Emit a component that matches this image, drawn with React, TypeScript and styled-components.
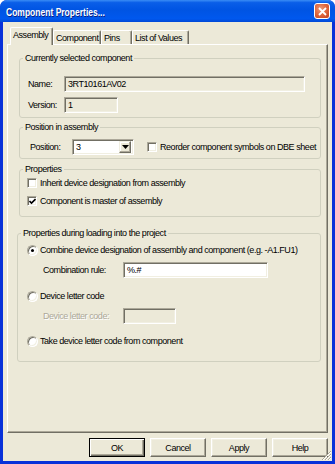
import React from 'react';
import styled, { createGlobalStyle } from 'styled-components';

const Global = createGlobalStyle`
  html, body { margin: 0; padding: 0; background: #ffffff; }
  body {
    font-family: "Liberation Sans", Arial, sans-serif;
    font-size: 9px;
    letter-spacing: -0.45px;
    color: #000;
  }
  * { box-sizing: border-box; }
`;

const Window = styled.div`
  position: relative;
  width: 335px;
  height: 464px;
  display: flex;
  flex-direction: column;
  background: #0831d9;
  border-radius: 7px 7px 0 0;
  overflow: hidden;
`;

const TitleBar = styled.div`
  flex: 0 0 22px;
  display: flex;
  align-items: center;
  justify-content: space-between;
  padding: 1px 5px 0 6px;
  background: linear-gradient(to bottom, #3a8cf5 0%, #0a5ee8 12%, #0054e3 45%, #0058ee 85%, #0048d6 100%);
`;

const TitleText = styled.span`
  display: inline-block;
  color: #fff;
  font-weight: bold;
  font-size: 11.5px;
  letter-spacing: 0;
  text-shadow: 1px 1px 0 #0a1e80;
  transform: scaleX(0.74);
  transform-origin: left center;
  white-space: nowrap;
`;

const CloseButton = styled.div`
  width: 16px;
  height: 16px;
  margin-top: -1px;
  border: 1px solid #fff;
  border-radius: 3px;
  background: radial-gradient(circle at 40% 35%, #ef9a78 0%, #e06a40 45%, #c4401c 100%);
  display: flex;
  align-items: center;
  justify-content: center;
`;

const Client = styled.div`
  flex: 1;
  margin: 0 3px 3px 3px;
  background: #ece9d8;
  display: flex;
  flex-direction: column;
  padding: 6px 4px 0 4px;
`;

const TabStrip = styled.div`
  display: flex;
  align-items: flex-end;
  height: 16px;
  padding-left: 3px;
`;

const Tab = styled.div<{ $active?: boolean; $w: number }>`
  position: relative;
  z-index: ${(p) => (p.$active ? 2 : 1)};
  width: ${(p) => p.$w}px;
  height: ${(p) => (p.$active ? 18 : 14)}px;
  margin-bottom: ${(p) => (p.$active ? -1 : 0)}px;
  background: #ece9d8;
  border-top: 1px solid #ffffff;
  border-left: 1px solid #ffffff;
  border-right: 1px solid #716f64;
  box-shadow: inset -1px 0 0 #aca899;
  border-radius: 2px 2px 0 0;
  display: flex;
  align-items: ${(p) => (p.$active ? 'flex-start' : 'center')};
  padding: ${(p) => (p.$active ? '2px 0 0 2px' : '0 0 0 2px')};
  white-space: nowrap;
  overflow: hidden;
`;

const Panel = styled.div`
  flex: 0 0 389px;
  border-top: 1px solid #ffffff;
  border-left: 1px solid #ffffff;
  border-right: 1px solid #716f64;
  border-bottom: 1px solid #716f64;
  box-shadow: inset -1px -1px 0 #aca899;
  padding: 7px 6px 0 11px;
  display: flex;
  flex-direction: column;
`;

const Group = styled.fieldset<{ $shift?: number; $gap?: number }>`
  margin: ${(p) => p.$gap ?? 0}px 0 0 ${(p) => -(p.$shift ?? 0)}px;
  padding: 0;
  min-width: 0;
  border: 1px solid #d0d0bf;
  border-radius: 3px;
`;

const Legend = styled.legend`
  margin-left: 3px;
  padding: 0 2px;
  line-height: 12px;
  height: 12px;
`;

const GroupBody = styled.div<{ $pt: number; $pb: number; $pl: number; $gap?: number }>`
  display: flex;
  flex-direction: column;
  gap: ${(p) => p.$gap ?? 0}px;
  padding: ${(p) => p.$pt}px 0 ${(p) => p.$pb}px ${(p) => p.$pl}px;
`;

const Row = styled.div<{ $mt?: number; $indent?: number }>`
  display: flex;
  align-items: center;
  min-height: 14px;
  margin-top: ${(p) => p.$mt ?? 0}px;
  margin-left: ${(p) => p.$indent ?? 0}px;
`;

const Label = styled.span<{ $w?: number; $disabled?: boolean }>`
  width: ${(p) => (p.$w ? `${p.$w}px` : 'auto')};
  flex: 0 0 auto;
  white-space: nowrap;
  color: ${(p) => (p.$disabled ? '#aca899' : '#000')};
  text-shadow: ${(p) => (p.$disabled ? '1px 1px 0 #ffffff' : 'none')};
`;

const TextBox = styled.div<{ $w: number; $readonly?: boolean }>`
  width: ${(p) => p.$w}px;
  height: 16px;
  background: ${(p) => (p.$readonly ? '#ece9d8' : '#ffffff')};
  border-top: 1px solid #aca899;
  border-left: 1px solid #aca899;
  border-right: 1px solid #ffffff;
  border-bottom: 1px solid #ffffff;
  box-shadow: inset 1px 1px 0 #716f64, inset -1px -1px 0 #f1efe2;
  padding: 0 3px;
  display: flex;
  align-items: center;
  white-space: nowrap;
`;

const Combo = styled(TextBox)`
  padding: 0 2px 0 3px;
  justify-content: space-between;
`;

const ComboButton = styled.div`
  width: 12px;
  height: 12px;
  background: #ece9d8;
  border-top: 1px solid #f1efe2;
  border-left: 1px solid #f1efe2;
  border-right: 1px solid #716f64;
  border-bottom: 1px solid #716f64;
  box-shadow: inset -1px -1px 0 #aca899, inset 1px 1px 0 #ffffff;
  display: flex;
  align-items: center;
  justify-content: center;
`;

const CheckBox = styled.div`
  flex: 0 0 10px;
  width: 10px;
  height: 10px;
  background: #ffffff;
  border-top: 1px solid #aca899;
  border-left: 1px solid #aca899;
  border-right: 1px solid #ffffff;
  border-bottom: 1px solid #ffffff;
  box-shadow: inset 1px 1px 0 #716f64, inset -1px -1px 0 #f1efe2;
  display: flex;
  align-items: center;
  justify-content: center;
  margin-right: 3px;
`;

const Radio = styled.div`
  flex: 0 0 11px;
  width: 11px;
  height: 11px;
  border-radius: 50%;
  background: #ffffff;
  border-top: 1px solid #aca899;
  border-left: 1px solid #aca899;
  border-right: 1px solid #ffffff;
  border-bottom: 1px solid #ffffff;
  box-shadow: inset 1px 1px 0 #716f64, inset -1px -1px 0 #f1efe2;
  display: flex;
  align-items: center;
  justify-content: center;
  margin-right: 2px;
`;

const Dot = styled.div`
  width: 3px;
  height: 3px;
  border-radius: 50%;
  background: #000;
`;

const Spacer = styled.div`
  flex: 1;
`;

const ButtonRow = styled.div`
  display: flex;
  justify-content: flex-end;
  gap: 5px;
  padding: 5px 0 0 0;
`;

const Button = styled.div<{ $default?: boolean }>`
  width: 56px;
  height: 19px;
  background: #ece9d8;
  border-top: 1px solid ${(p) => (p.$default ? '#000' : '#ffffff')};
  border-left: 1px solid ${(p) => (p.$default ? '#000' : '#ffffff')};
  border-right: 1px solid ${(p) => (p.$default ? '#000' : '#716f64')};
  border-bottom: 1px solid ${(p) => (p.$default ? '#000' : '#716f64')};
  box-shadow: ${(p) =>
    p.$default
      ? 'inset 1px 1px 0 #ffffff, inset -1px -1px 0 #716f64, inset -2px -2px 0 #aca899'
      : 'inset -1px -1px 0 #aca899, inset 1px 1px 0 #f1efe2'};
  display: flex;
  align-items: center;
  justify-content: center;
`;

const Grip = styled.svg`
  position: absolute;
  right: 3px;
  bottom: 3px;
`;

const Check = () => (
  <svg width="7" height="7" viewBox="0 0 7 7">
    <path d="M0.5 3 L2.5 5 L6.5 1" stroke="#000" strokeWidth="1.6" fill="none" />
  </svg>
);

export default function App() {
  return (
    <>
      <Global />
      <Window>
        <TitleBar>
          <TitleText>Component Properties...</TitleText>
          <CloseButton>
            <svg width="9" height="9" viewBox="0 0 9 9">
              <path d="M1 1 L8 8 M8 1 L1 8" stroke="#fff" strokeWidth="1.8" />
            </svg>
          </CloseButton>
        </TitleBar>
        <Client>
          <TabStrip>
            <Tab $active $w={43}>Assembly</Tab>
            <Tab $w={48}>Component</Tab>
            <Tab $w={31}>Pins</Tab>
            <Tab $w={57}>List of Values</Tab>
          </TabStrip>
          <Panel>
            <Group>
              <Legend>Currently selected component</Legend>
              <GroupBody $pt={12} $pb={4} $pl={8} $gap={5}>
                <Row>
                  <Label $w={36}>Name:</Label>
                  <TextBox $w={241} $readonly>3RT10161AV02</TextBox>
                </Row>
                <Row>
                  <Label $w={36}>Version:</Label>
                  <TextBox $w={54} $readonly>1</TextBox>
                </Row>
              </GroupBody>
            </Group>
            <Group $gap={3}>
              <Legend>Position in assembly</Legend>
              <GroupBody $pt={6} $pb={3} $pl={10}>
                <Row>
                  <Label $w={42}>Position:</Label>
                  <Combo $w={62}>
                    <span>3</span>
                    <ComboButton>
                      <svg width="7" height="4" viewBox="0 0 7 4">
                        <path d="M0 0 H7 L3.5 4 Z" fill="#000" />
                      </svg>
                    </ComboButton>
                  </Combo>
                  <Row $indent={13}>
                    <CheckBox />
                    <Label>Reorder component symbols on DBE sheet</Label>
                  </Row>
                </Row>
              </GroupBody>
            </Group>
            <Group $gap={4}>
              <Legend>Properties</Legend>
              <GroupBody $pt={1} $pb={8} $pl={7} $gap={4}>
                <Row>
                  <CheckBox />
                  <Label>Inherit device designation from assembly</Label>
                </Row>
                <Row>
                  <CheckBox>
                    <Check />
                  </CheckBox>
                  <Label>Component is master of assembly</Label>
                </Row>
              </GroupBody>
            </Group>
            <Group $gap={10} $shift={2}>
              <Legend>Properties during loading into the project</Legend>
              <GroupBody $pt={4} $pb={13} $pl={9}>
                <Row>
                  <Radio>
                    <Dot />
                  </Radio>
                  <Label>Combine device designation of assembly and component (e.g. -A1.FU1)</Label>
                </Row>
                <Row $mt={5} $indent={16}>
                  <Label $w={80}>Combination rule:</Label>
                  <TextBox $w={145}>%.#</TextBox>
                </Row>
                <Row $mt={11}>
                  <Radio />
                  <Label>Device letter code</Label>
                </Row>
                <Row $mt={5} $indent={16}>
                  <Label $w={80} $disabled>
                    Device letter code:
                  </Label>
                  <TextBox $w={53} $readonly />
                </Row>
                <Row $mt={10}>
                  <Radio />
                  <Label>Take device letter code from component</Label>
                </Row>
              </GroupBody>
            </Group>
            <Spacer />
          </Panel>
          <ButtonRow>
            <Button $default>OK</Button>
            <Button>Cancel</Button>
            <Button>Apply</Button>
            <Button>Help</Button>
          </ButtonRow>
        </Client>
        <Grip width="11" height="11" viewBox="0 0 11 11">
          <path d="M10 1 L1 10 M10 4 L4 10 M10 7 L7 10" stroke="#aca899" strokeWidth="1" />
          <path d="M10 2 L2 10 M10 5 L5 10 M10 8 L8 10" stroke="#ffffff" strokeWidth="1" />
        </Grip>
      </Window>
    </>
  );
}
